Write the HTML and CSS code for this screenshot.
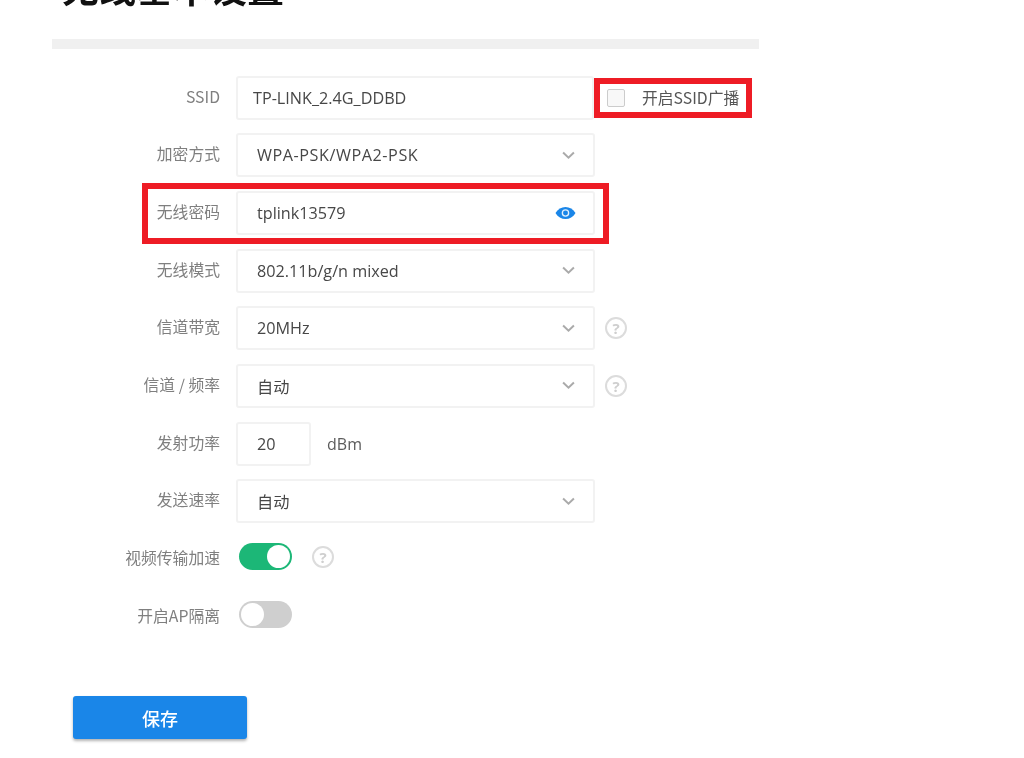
FILE: index.html
```html
<!DOCTYPE html>
<html lang="zh-CN">
<head>
<meta charset="utf-8">
<title>无线基本设置</title>
<link rel="stylesheet" href="styles.css">
</head>
<body>
<main class="page">
  <h1 class="title">无线基本设置</h1>
  <div class="divider"></div>
  <form class="form">
    <div class="row">
      <label class="label">SSID</label>
      <div class="field ssid">TP-LINK_2.4G_DDBD</div>
      <div class="broadcast"><span class="checkbox"></span><span class="broadcast-text">开启SSID广播</span></div>
    </div>
    <div class="row">
      <label class="label">加密方式</label>
      <div class="field"><span class="caps">WPA-PSK/WPA2-PSK</span><svg class="chev" viewBox="0 0 12 8"><path d="M1 1.2 6 6l5-4.8"/></svg></div>
    </div>
    <div class="row">
      <label class="label">无线密码</label>
      <div class="field">tplink13579<svg class="eye" viewBox="0 0 22 14"><path class="eye-shape" d="M0.5 7C3 2.8 6.8 0.6 11 0.6S19 2.8 21.5 7C19 11.2 15.2 13.4 11 13.4S3 11.2 0.5 7Z"/><circle class="eye-ring" cx="11" cy="7" r="4"/><circle class="eye-shape" cx="11" cy="7" r="2.6"/></svg></div>
    </div>
    <div class="row">
      <label class="label">无线模式</label>
      <div class="field">802.11b/g/n mixed<svg class="chev" viewBox="0 0 12 8"><path d="M1 1.2 6 6l5-4.8"/></svg></div>
    </div>
    <div class="row">
      <label class="label">信道带宽</label>
      <div class="field">20MHz<svg class="chev" viewBox="0 0 12 8"><path d="M1 1.2 6 6l5-4.8"/></svg></div>
      <span class="help">?</span>
    </div>
    <div class="row">
      <label class="label">信道 / 频率</label>
      <div class="field">自动<svg class="chev" viewBox="0 0 12 8"><path d="M1 1.2 6 6l5-4.8"/></svg></div>
      <span class="help">?</span>
    </div>
    <div class="row">
      <label class="label">发射功率</label>
      <div class="field short">20</div>
      <span class="unit">dBm</span>
    </div>
    <div class="row">
      <label class="label">发送速率</label>
      <div class="field">自动<svg class="chev" viewBox="0 0 12 8"><path d="M1 1.2 6 6l5-4.8"/></svg></div>
    </div>
    <div class="row">
      <label class="label">视频传输加速</label>
      <span class="toggle on"><span class="knob"></span></span>
      <span class="help help-toggle">?</span>
    </div>
    <div class="row">
      <label class="label">开启AP隔离</label>
      <span class="toggle"><span class="knob"></span></span>
    </div>
  </form>
  <button class="save" type="button">保存</button>
  <div class="mark mark-broadcast"></div>
  <div class="mark mark-password"></div>
</main>
</body>
</html>
```
FILE: styles.css
```css
* { box-sizing: border-box; }
html, body { margin: 0; height: 100%; overflow: hidden; background: #fff; }
body { font-family: "Open Sans", "Noto Sans CJK SC", sans-serif; color: #4c4c4c; }
.page { position: relative; width: 1024px; height: 758px; overflow: hidden; padding: 0 0 0 52px; filter: blur(.35px); }
.title { margin: -39px 0 0 10px; height: 67px; font: 700 37px/52px "Noto Sans CJK SC", sans-serif; color: #111; }
.divider { width: 707px; height: 10px; margin-top: 11px; background: #f0f0f0; }
.form { display: flex; flex-direction: column; gap: 13.67px; margin-top: 26.6px; }
.row { display: flex; align-items: center; height: 44px; }
.label { width: 168px; text-align: right; font: 15.8px/20px "Noto Sans CJK SC", sans-serif; color: #7f7f7f; margin: -2px 16px 0 0; }
.field { position: relative; display: flex; align-items: center; justify-content: space-between; width: 359px; height: 44px; padding: 0 18px 0 19px; border: 2px solid #f2f2f2; border-radius: 3px; font-size: 16.2px; color: #474747; font-family: "Open Sans", "Noto Sans CJK SC", sans-serif; }
.caps { letter-spacing: .55px; }
.ssid { width: 358px; padding-left: 15px; }
.short { width: 75px; }
.chev { width: 13px; height: 9px; fill: none; stroke: #aaa; stroke-width: 1.8; }
.eye { width: 21px; height: 14px; margin-right: -1px; }
.eye-shape { fill: #1a86e8; }
.eye-ring { fill: #e4f1fd; }
.broadcast { display: flex; align-items: center; margin-left: 13px; }
.checkbox { width: 18px; height: 18px; border: 1.5px solid #ccc; border-radius: 2px; background: #f8f8f8; }
.broadcast-text { margin-left: 17px; font: 15.8px/20px "Noto Sans CJK SC", "Open Sans", sans-serif; color: #555; white-space: nowrap; }
.help { display: flex; align-items: center; justify-content: center; width: 22px; height: 22px; margin-left: 10px; border: 2px solid #dcdcdc; border-radius: 50%; font: 700 15px/18px "Open Sans", sans-serif; color: #cfcfcf; }
.unit { margin-left: 16px; font-size: 16px; color: #5c5c5c; }
.toggle { display: flex; align-items: center; width: 53px; height: 27px; padding: 0 2px; margin: -5px 0 0 3px; border-radius: 14px; background: #cfcfcf; }
.toggle.on { justify-content: flex-end; background: #1cb777; }
.knob { width: 23px; height: 23px; border-radius: 50%; background: #fff; }
.help-toggle { margin: -4px 0 0 20px; }
.save { display: block; width: 174px; height: 43px; margin: 57.4px 0 0 21px; border: 0; border-radius: 3px; background: #1a86e8; box-shadow: 0 2px 3px rgba(0,0,0,.3); color: #fff; font: 500 18px/43px "Noto Sans CJK SC", sans-serif; }
.mark { position: absolute; border: 6px solid #ee1c25; }
.mark-broadcast { left: 594px; top: 78px; width: 158px; height: 40px; }
.mark-password { left: 142px; top: 183px; width: 467px; height: 61px; }
```
